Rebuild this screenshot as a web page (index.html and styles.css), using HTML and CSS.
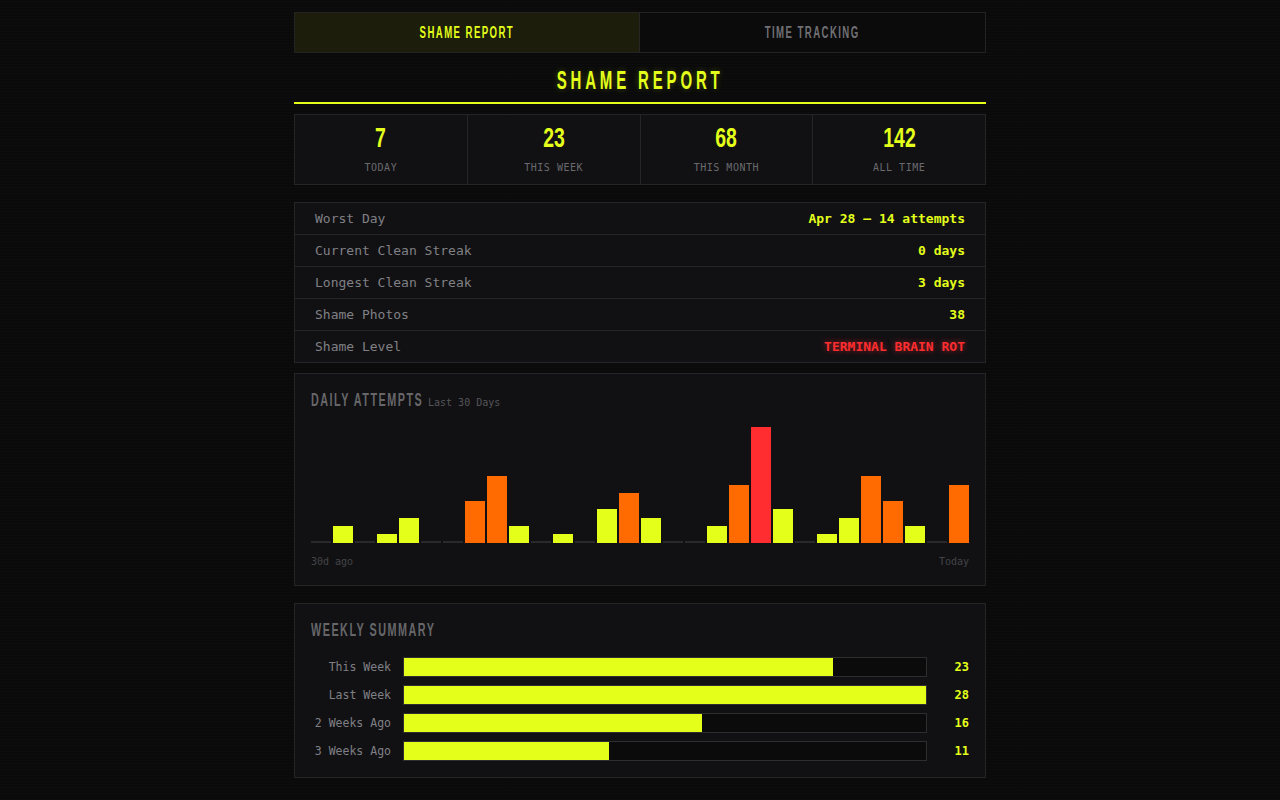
FILE: index.html
```html
<!DOCTYPE html>
<html lang="en">
<head>
<meta charset="utf-8">
<title>Shame Report</title>
<link rel="stylesheet" href="styles.css">
</head>
<body>
<div class="app">
  <nav class="tabs">
    <div class="tab active"><span class="cond">SHAME REPORT</span></div>
    <div class="tab"><span class="cond">TIME TRACKING</span></div>
  </nav>
  <h1 class="title"><span class="cond">SHAME REPORT</span></h1>

  <section class="stats">
    <div class="stat"><div class="num"><span class="cond">7</span></div><div class="lbl">TODAY</div></div>
    <div class="stat"><div class="num"><span class="cond">23</span></div><div class="lbl">THIS WEEK</div></div>
    <div class="stat"><div class="num"><span class="cond">68</span></div><div class="lbl">THIS MONTH</div></div>
    <div class="stat"><div class="num"><span class="cond">142</span></div><div class="lbl">ALL TIME</div></div>
  </section>

  <section class="info">
    <div class="row"><span class="k">Worst Day</span><span class="v">Apr 28 — 14 attempts</span></div>
    <div class="row"><span class="k">Current Clean Streak</span><span class="v">0 days</span></div>
    <div class="row"><span class="k">Longest Clean Streak</span><span class="v">3 days</span></div>
    <div class="row"><span class="k">Shame Photos</span><span class="v">38</span></div>
    <div class="row"><span class="k">Shame Level</span><span class="v danger">TERMINAL BRAIN ROT</span></div>
  </section>

  <section class="panel chart-panel">
    <div class="panel-head"><span class="panel-title cond with-sub">DAILY ATTEMPTS</span><span class="panel-sub">Last 30 Days</span></div>
    <div class="bars">
      <div class="bar empty"></div>
      <div class="bar y" style="height:17px"></div>
      <div class="bar empty"></div>
      <div class="bar y" style="height:9px"></div>
      <div class="bar y" style="height:25px"></div>
      <div class="bar empty"></div>
      <div class="bar empty"></div>
      <div class="bar o" style="height:42px"></div>
      <div class="bar o" style="height:67px"></div>
      <div class="bar y" style="height:17px"></div>
      <div class="bar empty"></div>
      <div class="bar y" style="height:9px"></div>
      <div class="bar empty"></div>
      <div class="bar y" style="height:34px"></div>
      <div class="bar o" style="height:50px"></div>
      <div class="bar y" style="height:25px"></div>
      <div class="bar empty"></div>
      <div class="bar empty"></div>
      <div class="bar y" style="height:17px"></div>
      <div class="bar o" style="height:58px"></div>
      <div class="bar r" style="height:116px"></div>
      <div class="bar y" style="height:34px"></div>
      <div class="bar empty"></div>
      <div class="bar y" style="height:9px"></div>
      <div class="bar y" style="height:25px"></div>
      <div class="bar o" style="height:67px"></div>
      <div class="bar o" style="height:42px"></div>
      <div class="bar y" style="height:17px"></div>
      <div class="bar empty"></div>
      <div class="bar o" style="height:58px"></div>
    </div>
    <div class="axis"><span>30d ago</span><span>Today</span></div>
  </section>

  <section class="panel weekly">
    <div class="panel-head"><span class="panel-title cond">WEEKLY SUMMARY</span></div>
    <div class="wrows">
      <div class="wrow"><span class="wl">This Week</span><div class="track"><div class="fill" style="width:82.1%"></div></div><span class="wv">23</span></div>
      <div class="wrow"><span class="wl">Last Week</span><div class="track"><div class="fill" style="width:100%"></div></div><span class="wv">28</span></div>
      <div class="wrow"><span class="wl">2 Weeks Ago</span><div class="track"><div class="fill" style="width:57.1%"></div></div><span class="wv">16</span></div>
      <div class="wrow"><span class="wl">3 Weeks Ago</span><div class="track"><div class="fill" style="width:39.3%"></div></div><span class="wv">11</span></div>
    </div>
  </section>
</div>
</body>
</html>
```

FILE: styles.css
```css
* { box-sizing: border-box; }
html, body { margin: 0; padding: 0; }
body {
  background-color: #0a0a0a;
  background-image: repeating-linear-gradient(0deg, rgba(255,255,255,0.012) 0px, rgba(255,255,255,0.012) 1px, transparent 1px, transparent 3px);
  font-family: "DejaVu Sans Mono", "Liberation Mono", monospace;
  color: #888;
  padding-top: 12px;
  min-height: 800px;
}
.app { width: 692px; margin: 0 auto; }

/* condensed display face: Liberation Sans Bold narrowed */
.cond {
  display: inline-block;
  vertical-align: top;
  font-family: "Liberation Sans", Arial, sans-serif;
  font-weight: 700;
  transform: scaleX(0.6);
  white-space: nowrap;
}

.tabs {
  display: grid;
  grid-template-columns: 1fr 1fr;
  border: 1px solid #232323;
  height: 41px;
}
.tab {
  display: flex; align-items: center; justify-content: center;
  font-size: 16px;
  line-height: 20px;
  letter-spacing: 2.4px;
  color: #707074;
  background: #0b0b0b;
}
.tab.active {
  color: #e4ff1a;
  background: #1c1d0b;
  border-right: 1px solid #262626;
}

.title {
  margin: 12px 0 0;
  padding-bottom: 7px;
  border-bottom: 2px solid #e4ff1a;
  text-align: center;
  font-size: 25px;
  line-height: 30px;
  height: 39px;
  font-weight: 700;
  letter-spacing: 6.4px;
  color: #e4ff1a;
  text-shadow: 0 0 8px rgba(228,255,26,0.25);
}

.stats {
  margin-top: 10px;
  display: grid;
  grid-template-columns: repeat(4, 1fr);
  gap: 1px;
  background: #252527;
  border: 1px solid #252527;
}
.stat {
  background: #111114;
  text-align: center;
  padding: 8px 0 9px;
}
.num {
  font-size: 27px;
  line-height: 30px;
  height: 30px;
  color: #e4ff1a;
}
.num .cond { transform: scaleX(0.72); }
.lbl {
  margin-top: 8px;
  font-size: 10px;
  line-height: 14px;
  letter-spacing: 0.5px;
  color: #6a6a6e;
}

.info {
  margin-top: 17px;
  border: 1px solid #252527;
  background: #111114;
}
.row {
  display: flex; justify-content: space-between; align-items: center;
  height: 32px;
  padding: 0 20px;
  border-bottom: 1px solid #252527;
  font-size: 13px;
}
.row:last-child { border-bottom: 0; height: 31px; }
.k { color: #808084; }
.v { color: #e4ff1a; font-weight: 700; }
.v.danger { color: #ff2d30; text-shadow: 0 0 6px rgba(255,45,48,0.6); }

.panel {
  border: 1px solid #252527;
  background: #111114;
  padding: 16px;
}
.chart-panel { margin-top: 10px; }
.weekly { margin-top: 17px; }
.panel-head { display: flex; align-items: baseline; height: 20px; line-height: 20px; }
.panel-title {
  font-size: 18px;
  letter-spacing: 2.5px;
  color: #666669;
  transform-origin: left center;
  vertical-align: baseline;
}
.panel-title.with-sub { margin-right: -70px; }
.panel-sub { font-size: 10px; color: #555558; }

.bars {
  margin-top: 13px;
  height: 120px;
  display: flex;
  align-items: flex-end;
  gap: 2px;
}
.bar { width: 20px; flex: 0 0 20px; }
.bar.empty { height: 2px; background: #2a2a2d; }
.bar.y { background: #e4ff1a; }
.bar.o { background: #ff6b00; }
.bar.r { background: #ff2d30; }

.axis {
  margin-top: 12px;
  display: flex; justify-content: space-between;
  font-size: 10px; line-height: 14px;
  color: #444447;
}

.wrows { margin-top: 17px; display: flex; flex-direction: column; gap: 8px; }
.wrow {
  display: grid;
  grid-template-columns: 80px 1fr 30px;
  gap: 12px;
  align-items: center;
  height: 20px;
}
.wl { text-align: right; font-size: 11.5px; color: #808084; white-space: nowrap; }
.track { height: 20px; border: 1px solid #2e2e30; background: #0b0b0b; }
.fill { height: 100%; background: #e4ff1a; }
.wv { text-align: right; font-size: 12px; font-weight: 700; color: #e4ff1a; }
```
